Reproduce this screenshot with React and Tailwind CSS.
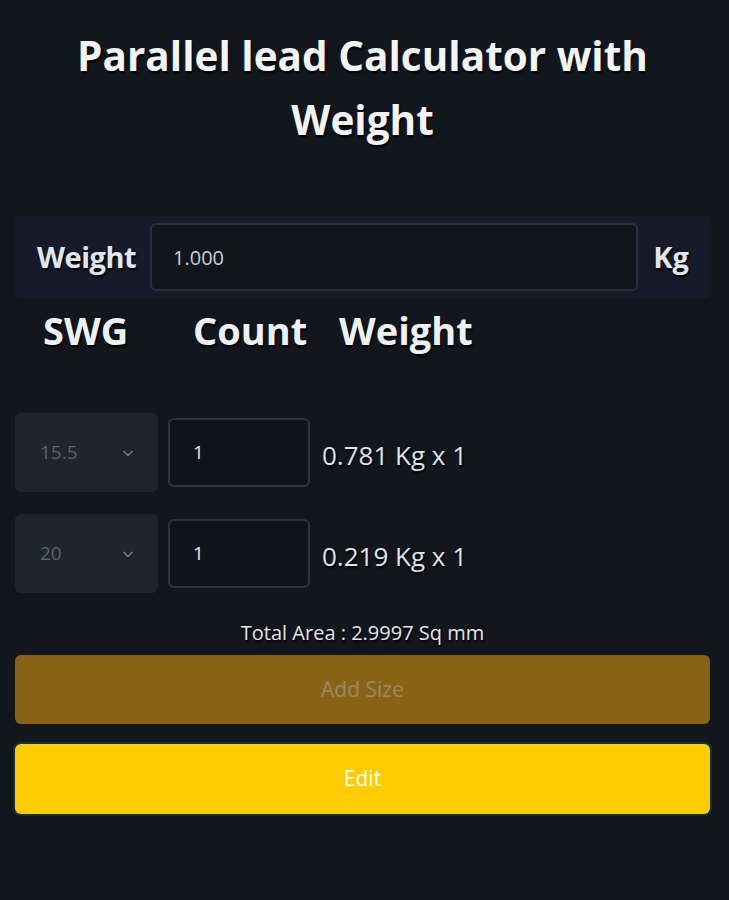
import React, { useState } from "react";

const shadow = "[text-shadow:1px_2px_2px_#000]";

function SizeRow({ swg, count, weight }) {
  return (
    <div className="flex items-center">
      <div className="flex h-[79px] w-[143px] items-center justify-between rounded-md bg-[#1e252d] pl-[25px] pr-[20px] text-[19px] text-[#5c646d]">
        <span>{swg}</span>
        <svg className="h-5 w-5 text-[#7b838c]" viewBox="0 0 24 24" fill="none" stroke="currentColor" strokeWidth="1.6" strokeLinecap="round" strokeLinejoin="round">
          <path d="m7 10 5 5 5-5" />
        </svg>
      </div>
      <div className="ml-[10px] flex h-[69px] w-[142px] items-center rounded-md border-2 border-[#2c343c] bg-[#0f1419] pl-[23px] text-[19px] text-[#e6e9ec]">
        {count}
      </div>
      <span className={`ml-3 pt-[6px] text-[26px] text-[#dfe3e6] ${shadow}`}>{weight}</span>
    </div>
  );
}

export default function App() {
  const [weight, setWeight] = useState("1.000");

  return (
    <div
      className="min-h-screen bg-[#12171d] pl-[15px] pr-[19px] pt-6 pb-20 text-white"
      style={{ fontFamily: '"Open Sans", "Noto Sans", sans-serif' }}
    >
      <h1 className={`text-center text-[40.5px] font-bold leading-[64px] text-[#f3f4f6] ${shadow}`}>
        Parallel lead Calculator with
        <br />
        Weight
      </h1>

      <div className="mt-16 flex h-[82px] items-center rounded-sm bg-[#161b2b] pl-[22px] pr-[21px]">
        <span className={`text-[29px] font-bold tracking-[-0.5px] text-[#e1e7ee] ${shadow}`}>Weight</span>
        <input
          value={weight}
          onChange={(e) => setWeight(e.target.value)}
          className="ml-[14px] h-[68px] min-w-0 flex-1 rounded-md border-2 border-[#2a323b] bg-[#11161c] px-[21px] text-[20px] text-[#c9ced3] outline-none"
        />
        <span className={`ml-[15px] text-[29px] font-bold text-[#e1e7ee] ${shadow}`}>Kg</span>
      </div>

      <div className={`mt-[12px] flex h-[40px] items-center text-[38px] font-bold text-[#eef1f4] ${shadow}`}>
        <span className="w-[178px] pl-[28px]">SWG</span>
        <span className="w-[146px]">Count</span>
        <span>Weight</span>
      </div>

      <div className="mt-[63px] flex flex-col gap-[22px]">
        <SizeRow swg="15.5" count="1" weight="0.781 Kg x 1" />
        <SizeRow swg="20" count="1" weight="0.219 Kg x 1" />
      </div>

      <p className={`mt-[25px] text-center text-[20px] text-[#e3e6e9] ${shadow}`}>Total Area : 2.9997 Sq mm</p>

      <button className="mt-[7px] h-[69px] w-full rounded-md bg-[#886316] text-[21px] text-[#9a8a66]">
        Add Size
      </button>

      <button className="mt-[20px] h-[70px] w-full rounded-md bg-[#ffcc00] text-[21px] text-white ring-2 ring-[#0e3345]">
        Edit
      </button>
    </div>
  );
}
